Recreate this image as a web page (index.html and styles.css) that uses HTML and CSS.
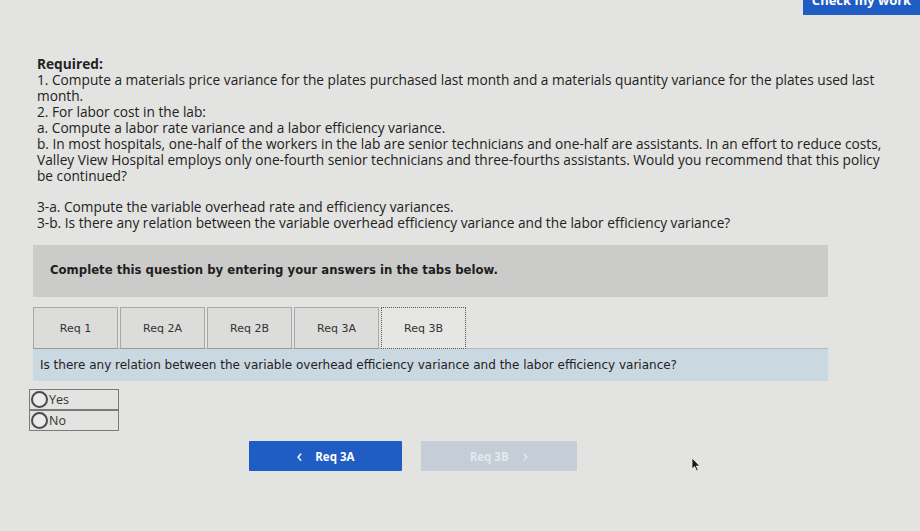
FILE: index.html
```
<!DOCTYPE html>
<html>
<head>
<meta charset="UTF-8">
<title>Req 3B</title>
<link rel="stylesheet" href="styles.css">
</head>
<body>
<div id="page">
<div class="topbar"><span class="check">Check my work</span></div>

<div class="required">
    <p><b>Required:</b><br>
    1. Compute a materials price variance for the plates purchased last month and a materials quantity variance for the plates used last month.<br>
    2. For labor cost in the lab:<br>
    a. Compute a labor rate variance and a labor efficiency variance.<br>
    b. In most hospitals, one-half of the workers in the lab are senior technicians and one-half are assistants. In an effort to reduce costs, Valley View Hospital employs only one-fourth senior technicians and three-fourths assistants. Would you recommend that this policy be continued?</p>
    <p class="gap">3-a. Compute the variable overhead rate and efficiency variances.<br>
    3-b. Is there any relation between the variable overhead efficiency variance and the labor efficiency variance?</p>
</div>

<div class="banner">Complete this question by entering your answers in the tabs below.</div>

<ul class="tabs">
    <li>Req 1</li>
    <li>Req 2A</li>
    <li>Req 2B</li>
    <li>Req 3A</li>
    <li class="on">Req 3B</li>
</ul>
<div class="question">Is there any relation between the variable overhead efficiency variance and the labor efficiency variance?</div>

<table class="choices">
    <tr><td><span class="radio"></span>Yes</td></tr>
    <tr><td><span class="radio"></span>No</td></tr>
</table>

<div class="nav">
    <span class="btn prev"><i class="chev">&lsaquo;</i>Req 3A</span>
    <span class="btn next">Req 3B<i class="chev">&rsaquo;</i></span>
</div>

<svg class="cursor" width="10" height="15" viewBox="0 0 10 15"><path d="M1 1 L1 12 L3.6 9.6 L5.6 14 L7.2 13.2 L5.3 9 L8.8 9 Z" fill="#1a1a1a" stroke="#eee" stroke-width="0.8"/></svg>
</div>
</body>
</html>
```

FILE: styles.css
```
*{margin:0;padding:0}
body{background:#e3e3e1;color:#222;font-family:"Open Sans",Lato,sans-serif;}
#page{position:relative;height:531px;overflow:hidden;padding-left:33px;}
.topbar{display:flex;justify-content:flex-end;height:15px;}
.topbar .check{display:block;width:117px;height:30px;margin-top:-15px;background:#1f5cc4;color:#fff;font-weight:bold;font-size:13px;line-height:30px;text-align:center;}
.required{padding:41px 0 0 4px;width:860px;font-size:13.7px;line-height:16px;}
.required b{font-weight:bold;}
.required .gap{margin-top:15px;}
.banner{margin-top:14px;width:778px;padding:17px 0 19px 17px;background:#cbcbca;font-family:"DejaVu Sans",Verdana,sans-serif;font-size:11.7px;font-weight:bold;line-height:16px;color:#1e1e1e;}
.tabs{list-style:none;display:flex;gap:2px;margin-top:10px;}
.tabs li{width:83px;height:40px;border:1px solid #a8a8a8;border-bottom-color:#9a9a9a;background:#dcdcdb;font-family:"DejaVu Sans",Verdana,sans-serif;font-size:11px;color:#333;display:flex;align-items:center;justify-content:center;}
.tabs li.on{background:#e6e6e5;border:1px dotted #555;}
.question{margin-top:-1px;width:781px;padding:8px 7px 8px 7px;background:#cad8e2;border-top:1px solid #b0bcc4;font-family:"DejaVu Sans",Verdana,sans-serif;font-size:12px;line-height:16px;color:#222;}
.choices{margin:8px 0 0 -4px;border-collapse:collapse;width:90px;}
.choices td{border:1px solid #7a7a7a;height:19px;font-size:12.5px;color:#333;display:flex;align-items:center;gap:1px;padding-left:1px;}
.radio{display:inline-block;width:13px;height:13px;border:2px solid #4a4a4a;border-radius:50%;background:#ecebea;}
.nav{display:flex;gap:19px;margin:10px 0 0 216px;}
.btn{display:flex;align-items:center;justify-content:center;height:30px;font-weight:bold;font-size:11.5px;border-radius:1px;}
.btn .chev{font-style:normal;font-size:19px;font-weight:normal;line-height:20px;margin-top:-3px;}
.prev{width:153px;background:#1f5cc4;color:#fff;}
.prev .chev{margin-right:13px;}
.next{width:156px;background:#c5cdd6;color:#e4e9ef;}
.next .chev{margin-left:14px;}
.cursor{position:absolute;left:691px;top:457px;}
```
